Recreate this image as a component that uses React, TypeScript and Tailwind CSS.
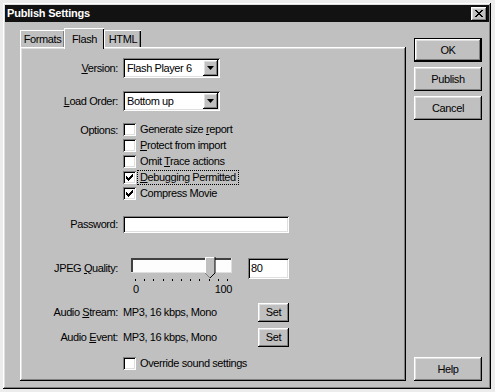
import React from "react";

const raised =
  "shadow-[inset_-1px_-1px_#000,inset_1px_1px_#fff,inset_-2px_-2px_#808080,inset_2px_2px_#dfdfdf]";
const sunken =
  "shadow-[inset_1px_1px_#808080,inset_-1px_-1px_#fff,inset_2px_2px_#000,inset_-2px_-2px_#dfdfdf]";

const Check = ({ checked }: { checked?: boolean }) => (
  <span className={`flex h-[13px] w-[13px] shrink-0 items-center justify-center bg-white ${sunken}`}>
    {checked && (
      <svg width="7" height="7" viewBox="0 0 7 7" shapeRendering="crispEdges">
        <path d="M0 2h1v1h1v1h1v-1h1v-1h1v-1h1v-1h1v3h-1v1h-1v1h-1v1h-1v1h-1v-1h-1v-1h-1z" fill="#000" />
      </svg>
    )}
  </span>
);

const Select = ({ value }: { value: string }) => (
  <div className={`flex h-[20px] w-[97px] items-center bg-white p-[2px] ${sunken}`}>
    <span className="flex-1 whitespace-nowrap pl-[2px] leading-none">{value}</span>
    <span className={`flex h-[16px] w-[15px] items-center justify-center bg-[#c0c0c0] ${raised}`}>
      <svg width="7" height="4" viewBox="0 0 7 4">
        <path d="M0 0h7L3.5 4z" fill="#000" />
      </svg>
    </span>
  </div>
);

const Btn = ({ label, def, className = "" }: { label: string; def?: boolean; className?: string }) => (
  <div className={`${def ? "border border-black" : ""} ${className}`}>
    <div className={`flex h-full w-full items-center justify-center bg-[#c0c0c0] ${raised}`}>{label}</div>
  </div>
);

const Label = ({ children, className = "" }: { children: React.ReactNode; className?: string }) => (
  <div className={`w-[97px] shrink-0 whitespace-nowrap pr-[1px] text-right ${className}`}>{children}</div>
);

const CheckRow = ({ checked, focus, children }: { checked?: boolean; focus?: boolean; children: React.ReactNode }) => (
  <div className="flex h-[16px] items-center">
    <Check checked={checked} />
    <span
      className={`ml-[2px] whitespace-nowrap px-[2px] leading-[13px] ${focus ? "outline outline-1 outline-dotted outline-black" : ""}`}
    >
      {children}
    </span>
  </div>
);

const Slider = () => {
  const ticks = Array.from({ length: 11 }, (_, i) => 12 + i * 9.2);
  return (
    <svg width="112" height="25" viewBox="0 0 112 25" shapeRendering="crispEdges">
      <rect x="8" y="1" width="101" height="15" fill="#fdfdfd" />
      <rect x="8" y="1" width="101" height="2" fill="#404040" />
      <rect x="8" y="1" width="2" height="15" fill="#404040" />
      <rect x="8" y="15" width="101" height="1" fill="#dfdfdf" />
      <rect x="108" y="1" width="1" height="15" fill="#dfdfdf" />
      <path d="M82 0h10v16l-5 5l-5-5z" fill="#c0c0c0" shapeRendering="auto" />
      <path d="M82 16V0h10" stroke="#fff" fill="none" />
      <path d="M92 0v16l-5 5" stroke="#000" fill="none" shapeRendering="auto" />
      <path d="M82 16l5 5" stroke="#808080" fill="none" shapeRendering="auto" />
      {ticks.map((x) => (
        <rect key={x} x={Math.round(x)} y="22" width="1" height="2" fill="#000" />
      ))}
    </svg>
  );
};

export default function App() {
  return (
    <div className="h-[392px] w-[495px] overflow-hidden bg-[#ececec] pl-[3px] pt-[3px] text-[11px] tracking-[-0.4px] text-black [font-family:'Liberation_Sans',Arial,sans-serif]">
      <div className={`flex h-[386px] w-[488px] flex-col bg-[#c0c0c0] p-[2px] ${raised}`}>
        {/* title bar */}
        <div className="flex h-[17px] items-center bg-[#121212] pl-[2px] pr-[2px]">
          <span className="flex-1 font-bold tracking-[-0.2px] text-white">Publish Settings</span>
          <div className={`flex h-[14px] w-[16px] items-center justify-center bg-[#c0c0c0] ${raised}`}>
            <svg width="8" height="7" viewBox="0 0 8 7" shapeRendering="crispEdges">
              <path d="M0 0h2v1h1v1h2v-1h1v-1h2v1h-1v1h-1v1h-1v1h1v1h1v1h1v1h-2v-1h-1v-1h-2v1h-1v1h-2v-1h1v-1h1v-1h1v-1h-1v-1h-1v-1h-1z" fill="#000" />
            </svg>
          </div>
        </div>

        <div className="flex flex-1 pb-[6px]">
          {/* left: tabs + panel */}
          <div className="ml-[15px] mt-[6px] flex w-[386px] flex-col">
            <div className="flex h-[19px] items-end">
              <div className="flex h-[17px] w-[44px] items-center justify-center border-l border-t border-white pt-[1px] shadow-[inset_-1px_0_#808080]">
                Formats
              </div>
              <div className="relative z-10 -mb-[2px] flex h-[21px] w-[40px] items-start justify-center border-l border-t border-white bg-[#c0c0c0] pt-[2px] shadow-[inset_-1px_0_#000]">
                Flash
              </div>
              <div className="flex h-[17px] w-[37px] items-center justify-center border-l border-t border-white pt-[1px] shadow-[inset_-1px_0_#000,inset_-2px_0_#808080]">
                HTML
              </div>
            </div>
            <div className={`flex flex-1 flex-col bg-[#c0c0c0] p-[2px] ${raised}`}>
              <div className="mt-[9px] flex items-center">
                <Label>
                  <u>V</u>ersion:
                </Label>
                <div className="ml-[4px]">
                  <Select value="Flash Player 6" />
                </div>
              </div>
              <div className="mt-[13px] flex items-center">
                <Label>
                  <u>L</u>oad Order:
                </Label>
                <div className="ml-[4px]">
                  <Select value="Bottom up" />
                </div>
              </div>

              <div className="mt-[10px] flex items-start">
                <Label className="mt-[1px]">Options:</Label>
                <div className="ml-[4px] flex flex-col">
                  <CheckRow>
                    Generate size <u>r</u>eport
                  </CheckRow>
                  <CheckRow>
                    <u>P</u>rotect from import
                  </CheckRow>
                  <CheckRow>
                    Omit <u>T</u>race actions
                  </CheckRow>
                  <CheckRow checked focus>
                    <u>D</u>ebugging Permitted
                  </CheckRow>
                  <CheckRow checked>Compress Movie</CheckRow>
                </div>
              </div>

              <div className="mt-[15px] flex items-center">
                <Label>Password:</Label>
                <div className={`ml-[4px] h-[17px] w-[166px] bg-white ${sunken}`} />
              </div>

              <div className="mt-[24px] flex items-start">
                <Label className="mt-[3px]">
                  JPEG <u>Q</u>uality:
                </Label>
                <div className="ml-[4px] flex w-[112px] flex-col">
                  <Slider />
                  <div className="mt-[1px] flex justify-between pr-[3px] leading-[13px]">
                    <span className="ml-[10px]">0</span>
                    <span>100</span>
                  </div>
                </div>
                <div className={`ml-[13px] mt-[1px] h-[21px] w-[41px] bg-white px-[3px] pt-[2px] leading-[16px] ${sunken}`}>
                  80
                </div>
              </div>

              <div className="mt-[7px] flex items-center">
                <Label>
                  Audio <u>S</u>tream:
                </Label>
                <div className="ml-[4px] flex w-[166px] items-center justify-between">
                  <span className="whitespace-nowrap">MP3, 16 kbps, Mono</span>
                  <Btn label="Set" className="h-[19px] w-[31px]" />
                </div>
              </div>
              <div className="mt-[6px] flex items-center">
                <Label>
                  Audio <u>E</u>vent:
                </Label>
                <div className="ml-[4px] flex w-[166px] items-center justify-between">
                  <span className="whitespace-nowrap">MP3, 16 kbps, Mono</span>
                  <Btn label="Set" className="h-[19px] w-[31px]" />
                </div>
              </div>

              <div className="mt-[8px] flex items-center pl-[101px]">
                <CheckRow>Override sound settings</CheckRow>
              </div>
            </div>
          </div>

          {/* right: buttons */}
          <div className="ml-[8px] mt-[16px] flex w-[68px] flex-col">
            <Btn label="OK" def className="h-[24px]" />
            <Btn label="Publish" className="mt-[5px] h-[24px]" />
            <Btn label="Cancel" className="mt-[5px] h-[24px]" />
            <Btn label="Help" className="mt-auto h-[24px]" />
          </div>
        </div>
      </div>
    </div>
  );
}
